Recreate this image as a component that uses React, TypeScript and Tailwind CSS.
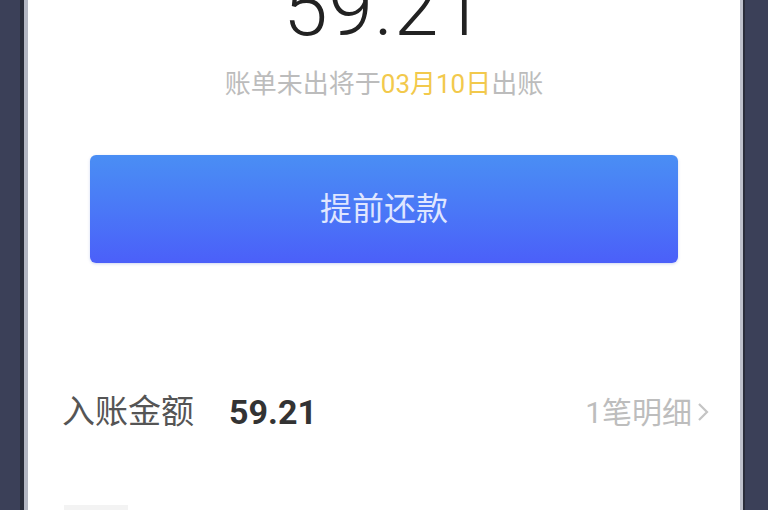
import React from "react";

export default function App() {
  const font = { fontFamily: 'Roboto, "Noto Sans CJK SC", sans-serif' };
  return (
    <div className="w-[768px] h-[510px] overflow-hidden flex bg-[#3b4058] whitespace-nowrap" style={font}>
      <div className="w-[20px] shrink-0 h-full bg-[#3b4058]" />
      <div className="w-[4px] shrink-0 h-full bg-[#2a2d3a]" />
      <div className="w-[4px] shrink-0 h-full bg-[#b4b7c2]" />
      <main className="w-[712px] shrink-0 h-full bg-white flex flex-col">
        <div className="mt-[-32px] h-[80px] text-[80px] leading-[80px] font-light text-[#222] text-center tracking-[1px]">
          59.21
        </div>
        <div className="mt-[18px] h-[36px] text-[26px] leading-[36px] text-[#bcbcbc] text-center">
          账单未出将于<span className="text-[#f2c94c]">03月10日</span>出账
        </div>
        <button className="mt-[53px] mx-[62px] h-[108px] rounded-[6px] bg-gradient-to-b from-[#4a8ef4] to-[#4b5ff9] text-[32px] text-[#dfe6ff] flex items-center justify-center shadow-[0_1px_3px_rgba(60,90,200,0.25)]">
          提前还款
        </button>
        <div className="mt-[119px] h-[60px] pl-[34px] pr-[30px] flex items-center">
          <span className="text-[33px] text-[#555]">入账金额</span>
          <span className="ml-[35px] text-[34px] font-bold text-[#333]">59.21</span>
          <span className="ml-auto flex items-center text-[30px] text-[#bdbdbd]">
            1笔明细
            <svg width="14" height="22" viewBox="0 0 14 22" className="ml-[4px]">
              <path d="M3 3 L11 11 L3 19" fill="none" stroke="#c4c4c4" strokeWidth="2.2" />
            </svg>
          </span>
        </div>
        <div className="mt-[63px] ml-[36px] w-[64px] h-[5px] bg-[#f3f3f3]" />
      </main>
      <div className="w-[3px] shrink-0 h-full bg-[#bfc2cc]" />
      <div className="w-[2px] shrink-0 h-full bg-[#2a2d3a]" />
      <div className="flex-1 h-full bg-[#3b4058]" />
    </div>
  );
}
